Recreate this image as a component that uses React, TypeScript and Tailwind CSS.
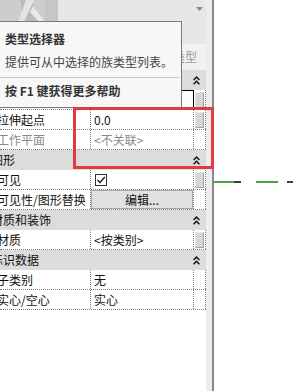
import type { ReactNode } from "react";

function Chevrons() {
  return (
    <svg width="7" height="9" viewBox="0 0 7 9" className="block">
      <path d="M0.6 4 L3.5 1 L6.4 4" fill="none" stroke="#111" strokeWidth="1.4" />
      <path d="M0.6 8.2 L3.5 5.2 L6.4 8.2" fill="none" stroke="#111" strokeWidth="1.4" />
    </svg>
  );
}

function Header({ title }: { title: string }) {
  return (
    <div className="h-[20px] shrink-0 bg-[#dcdcdc] flex items-center overflow-hidden">
      <span className="-ml-[9px] whitespace-nowrap text-[12px] leading-none text-[#111]">{title}</span>
      <span className="ml-auto mr-[6px]">
        <Chevrons />
      </span>
    </div>
  );
}

type RowProps = {
  label: string;
  value?: ReactNode;
  dim?: boolean;
  thumb?: boolean;
  selected?: boolean;
};

function Row({ label, value, dim, thumb, selected }: RowProps) {
  return (
    <div className="h-[20px] shrink-0 flex border-b border-dotted border-[#7d7d7d]">
      <div className="w-[91px] shrink-0 flex items-center overflow-hidden border-r border-dotted border-[#7d7d7d]">
        <span className={`-ml-[3px] whitespace-nowrap text-[12px] leading-none ${dim ? "text-[#8a8a8a]" : "text-[#111]"}`}>
          {label}
        </span>
      </div>
      <div
        className={`w-[103px] shrink-0 flex items-center pl-[3px] overflow-hidden border-r ${
          selected ? "border border-solid border-black bg-white" : "border-dotted border-[#7d7d7d]"
        }`}
      >
        {typeof value === "string" ? (
          <span className={`whitespace-nowrap text-[12px] leading-none ${dim ? "text-[#8a8a8a]" : "text-[#111]"}`}>
            {value}
          </span>
        ) : (
          value
        )}
      </div>
      <div className="w-[12px] shrink-0 flex pt-[2px] pb-[1px] pl-[1px] pr-[1px] border-r border-dotted border-[#7d7d7d]">
        {thumb && <div className="flex-1 bg-[#d6d6d6] border border-[#a3a3a3] border-t-[#e6e6e6] border-l-[#e6e6e6]" />}
      </div>
    </div>
  );
}

function CheckBox() {
  return (
    <div className="ml-[1px] w-[12px] h-[12px] border border-[#333] bg-white flex items-center justify-center">
      <svg width="10" height="10" viewBox="0 0 10 10">
        <path d="M1.5 5 L4 7.5 L8.8 2" fill="none" stroke="#111" strokeWidth="1.2" />
      </svg>
    </div>
  );
}

function EditButton() {
  return (
    <div className="-ml-[3px] w-[102px] h-[19px] bg-[#e1e1e1] border border-[#a8a8a8] flex items-center justify-center">
      <span className="text-[12px] leading-none text-[#111]">编辑...</span>
    </div>
  );
}

function TypeThumb() {
  return (
    <svg width="58" height="44" viewBox="0 0 58 44" className="block shrink-0">
      <rect x="0" y="0" width="58" height="44" fill="#cdcdcd" />
      <polygon points="20,0 32,0 44,44 30,44" fill="#b9b9b9" />
      <polygon points="26,0 34,0 24,22 18,22" fill="#e4e4e4" />
      <polygon points="33,6 45,22 39,22 30,12" fill="#e9e9e9" />
      <rect x="45" y="0" width="13" height="44" fill="#c6c6c6" />
    </svg>
  );
}

export default function App() {
  return (
    <div className="relative w-[293px] h-[391px] overflow-hidden bg-white flex font-['Noto_Sans_CJK_SC','Noto_Sans',sans-serif]">
      <div className="w-[206px] shrink-0 flex flex-col bg-white overflow-hidden">
        <div className="h-[44px] shrink-0 flex">
          <TypeThumb />
          <div className="flex-1 bg-[#e7e7e7] flex justify-end items-start pt-[7px] pr-[3px]">
            <svg width="7" height="4" viewBox="0 0 7 4">
              <polygon points="0,0 7,0 3.5,4" fill="#8a8a8a" />
            </svg>
          </div>
        </div>
        <div className="h-[26px] shrink-0 bg-[#f1f1f1] flex items-center justify-end pr-[9px]">
          <span className="text-[12px] leading-none text-[#9b9b9b] whitespace-nowrap">编辑类型</span>
        </div>
        <Header title="约束" />
        <Row label="拉伸终点" value="250.0" thumb selected />
        <Row label="拉伸起点" value="0.0" thumb />
        <Row label="工作平面" value="<不关联>" dim />
        <Header title="图形" />
        <Row label="可见" value={<CheckBox />} thumb />
        <Row label="可见性/图形替换" value={<EditButton />} />
        <Header title="材质和装饰" />
        <Row label="材质" value="<按类别>" thumb />
        <Header title="标识数据" />
        <Row label="子类别" value="无" />
        <Row label="实心/空心" value="实心" />
      </div>

      <div className="w-[8px] shrink-0 bg-[#ededed] border-r-2 border-[#8a8a8a]" />

      <div className="flex-1 bg-white">
        <svg width="79" height="391" viewBox="0 0 79 391" className="block">
          <line x1="0" y1="182" x2="20" y2="182" stroke="#1f8a1f" strokeWidth="1.6" />
          <line x1="20" y1="182" x2="27" y2="182" stroke="#111" strokeWidth="1.6" />
          <line x1="42" y1="182" x2="64" y2="182" stroke="#1f8a1f" strokeWidth="1.6" />
          <line x1="73" y1="182" x2="79" y2="182" stroke="#111" strokeWidth="1.6" />
        </svg>
      </div>

      {/* tooltip over the palette */}
      <div className="absolute left-0 top-[21px] w-[182px] h-[87px] bg-[#f7f7f7] border border-l-0 border-[#7a7a7a]">
        <div className="pl-[5px] pt-[9px] text-[12px] leading-[16px] font-bold text-[#333] whitespace-nowrap">类型选择器</div>
        <div className="pl-[5px] mt-[7px] text-[12px] leading-[16px] text-[#444] whitespace-nowrap">提供可从中选择的族类型列表。</div>
        <div className="mt-[7px] w-[179px] h-px bg-[#c4c4c4]" />
        <div className="pl-[5px] mt-[5px] text-[12px] leading-[16px] font-bold text-[#333] whitespace-nowrap">
          按 F1 键获得更多帮助
        </div>
      </div>

      {/* red annotation box */}
      <div className="absolute left-[73px] top-[107px] w-[141px] h-[62px] border-[3px] border-[#e23a40]" />
    </div>
  );
}
